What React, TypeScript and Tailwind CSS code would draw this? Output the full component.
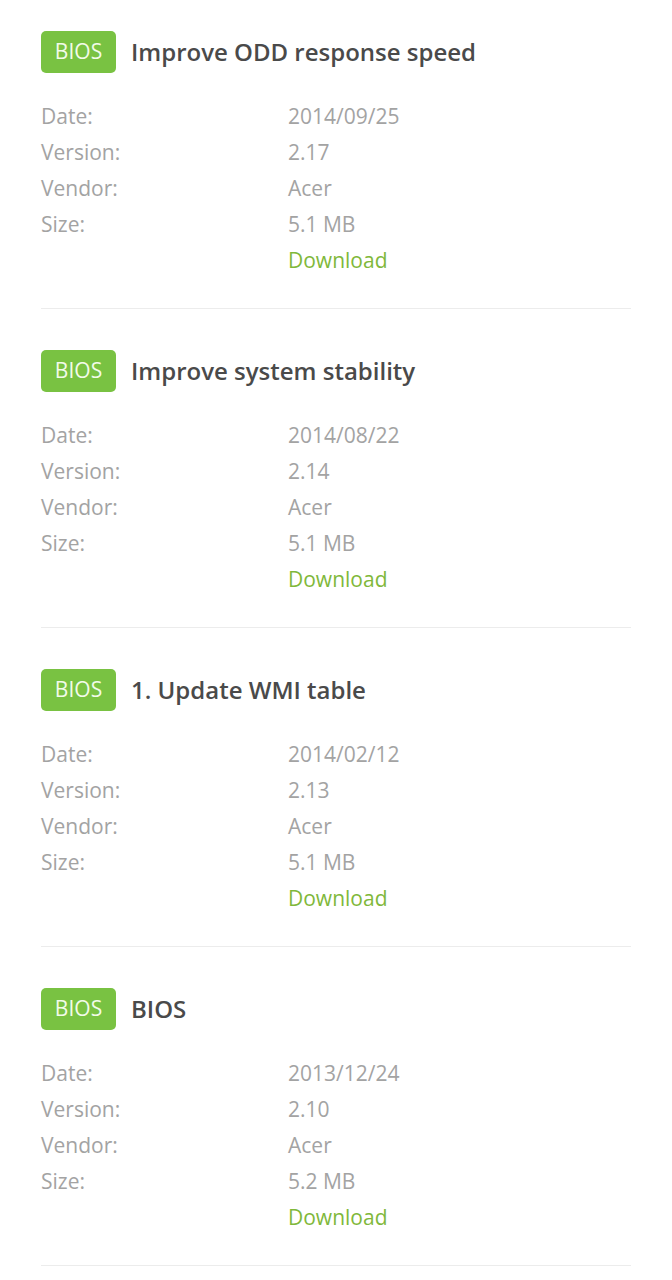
const items = [
  { title: "Improve ODD response speed", date: "2014/09/25", version: "2.17", vendor: "Acer", size: "5.1 MB" },
  { title: "Improve system stability", date: "2014/08/22", version: "2.14", vendor: "Acer", size: "5.1 MB" },
  { title: "1. Update WMI table", date: "2014/02/12", version: "2.13", vendor: "Acer", size: "5.1 MB" },
  { title: "BIOS", date: "2013/12/24", version: "2.10", vendor: "Acer", size: "5.2 MB" },
];

const Row = ({ label, value }: { label: string; value: string }) => (
  <div className="flex h-9 items-center">
    <span className="w-[247px] text-[#a3a3a3]">{label}</span>
    <span className="text-[#a3a3a3]">{value}</span>
  </div>
);

export default function App() {
  return (
    <div
      className="min-h-screen bg-white px-[41px] pt-[31px] text-[21px]"
      style={{ fontFamily: '"Open Sans", "Noto Sans", sans-serif' }}
    >
      {items.map((item) => (
        <div key={item.date} className="mb-[41px] border-b border-[#ececec] pb-[29px]">
          <div className="flex items-center">
            <span className="flex h-[42px] w-[75px] items-center justify-center rounded-[5px] bg-[#79c242] text-[21px] text-[#f2fbe9]">
              BIOS
            </span>
            <span className="ml-[15px] text-[24px] font-semibold text-[#4a4a4a]">
              {item.title}
            </span>
          </div>
          <div className="mt-[26px]">
            <Row label="Date:" value={item.date} />
            <Row label="Version:" value={item.version} />
            <Row label="Vendor:" value={item.vendor} />
            <Row label="Size:" value={item.size} />
            <div className="flex h-9 items-center">
              <span className="w-[247px]" />
              <a className="text-[#80b83a]">Download</a>
            </div>
          </div>
        </div>
      ))}
    </div>
  );
}
